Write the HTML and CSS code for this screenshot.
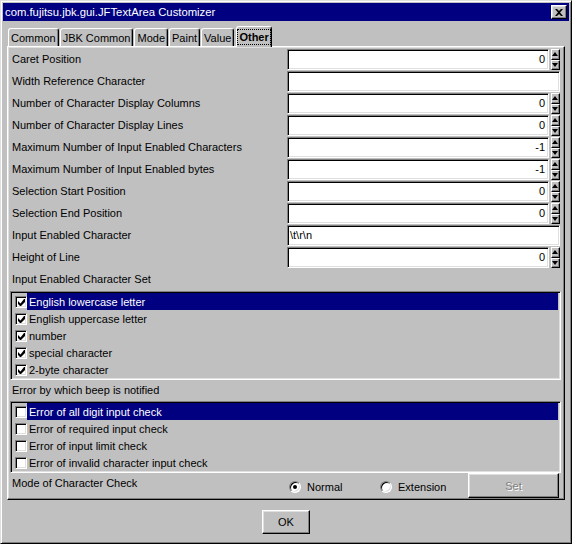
FILE: index.html
```html
<!DOCTYPE html>
<html>
<head>
<meta charset="utf-8">
<title>JFTextArea Customizer</title>
<link rel="stylesheet" href="styles.css">
</head>
<body>
<div class="window">
  <div class="titlebar">
    <span class="title">com.fujitsu.jbk.gui.JFTextArea Customizer</span>
    <span class="close"><svg width="8" height="7" viewBox="0 0 8 7"><path d="M0 0h2l2 2 2-2h2L5 3.5 8 7H6L4 5 2 7H0l3-3.5z" fill="#000"/></svg></span>
  </div>
  <div class="tabs">
    <div class="tab">Common</div>
    <div class="tab">JBK Common</div>
    <div class="tab">Mode</div>
    <div class="tab">Paint</div>
    <div class="tab">Value</div>
    <div class="tab active"><span class="focus">Other</span></div>
  </div>
  <div class="panel">
    <div class="row"><div class="label">Caret Position</div><div class="field num">0</div><div class="spin"><span class="sb up"></span><span class="sb down"></span></div></div>
    <div class="row"><div class="label">Width Reference Character</div><div class="field wide"></div></div>
    <div class="row"><div class="label">Number of Character Display Columns</div><div class="field num">0</div><div class="spin"><span class="sb up"></span><span class="sb down"></span></div></div>
    <div class="row"><div class="label">Number of Character Display Lines</div><div class="field num">0</div><div class="spin"><span class="sb up"></span><span class="sb down"></span></div></div>
    <div class="row"><div class="label">Maximum Number of Input Enabled Characters</div><div class="field num">-1</div><div class="spin"><span class="sb up"></span><span class="sb down"></span></div></div>
    <div class="row"><div class="label">Maximum Number of Input Enabled bytes</div><div class="field num">-1</div><div class="spin"><span class="sb up"></span><span class="sb down"></span></div></div>
    <div class="row"><div class="label">Selection Start Position</div><div class="field num">0</div><div class="spin"><span class="sb up"></span><span class="sb down"></span></div></div>
    <div class="row"><div class="label">Selection End Position</div><div class="field num">0</div><div class="spin"><span class="sb up"></span><span class="sb down"></span></div></div>
    <div class="row"><div class="label">Input Enabled Character</div><div class="field wide">\t\r\n</div></div>
    <div class="row"><div class="label">Height of Line</div><div class="field num">0</div><div class="spin"><span class="sb up"></span><span class="sb down"></span></div></div>

    <div class="section-label">Input Enabled Character Set</div>
    <div class="list">
      <div class="item"><span class="cb checked"><svg width="7" height="7" viewBox="0 0 7 7"><path d="M6 0h1v3L3 7H2L0 5V2l2.5 2.5z" fill="#000"/></svg></span><span class="text selected">English lowercase letter</span></div>
      <div class="item"><span class="cb checked"><svg width="7" height="7" viewBox="0 0 7 7"><path d="M6 0h1v3L3 7H2L0 5V2l2.5 2.5z" fill="#000"/></svg></span><span class="text">English uppercase letter</span></div>
      <div class="item"><span class="cb checked"><svg width="7" height="7" viewBox="0 0 7 7"><path d="M6 0h1v3L3 7H2L0 5V2l2.5 2.5z" fill="#000"/></svg></span><span class="text">number</span></div>
      <div class="item"><span class="cb checked"><svg width="7" height="7" viewBox="0 0 7 7"><path d="M6 0h1v3L3 7H2L0 5V2l2.5 2.5z" fill="#000"/></svg></span><span class="text">special character</span></div>
      <div class="item"><span class="cb checked"><svg width="7" height="7" viewBox="0 0 7 7"><path d="M6 0h1v3L3 7H2L0 5V2l2.5 2.5z" fill="#000"/></svg></span><span class="text">2-byte character</span></div>
    </div>

    <div class="section-label short">Error by which beep is notified</div>
    <div class="list">
      <div class="item"><span class="cb"></span><span class="text selected">Error of all digit input check</span></div>
      <div class="item"><span class="cb"></span><span class="text">Error of required input check</span></div>
      <div class="item"><span class="cb"></span><span class="text">Error of input limit check</span></div>
      <div class="item"><span class="cb"></span><span class="text">Error of invalid character input check</span></div>
    </div>

    <div class="mode-row">
      <div class="label">Mode of Character Check</div>
      <div class="options">
        <label class="opt"><span class="radio on"></span>Normal</label>
        <label class="opt opt2"><span class="radio"></span>Extension</label>
        <button class="btn set" disabled>Set</button>
      </div>
    </div>
  </div>
  <div class="footer"><button class="btn ok">OK</button></div>
</div>
</body>
</html>
```
FILE: styles.css
```css
* { box-sizing: border-box; }
html, body { margin: 0; padding: 0; background: #c0c0c0; }
body {
  font-family: "Liberation Sans", Arial, sans-serif;
  font-size: 11px;
  color: #000;
}
.window {
  width: 572px;
  height: 544px;
  background: #c0c0c0;
  border: 1px solid;
  border-color: #dfdfdf #000 #000 #dfdfdf;
  box-shadow: inset 1px 1px #fff, inset -1px -1px #808080;
  padding: 2px;
  display: flex;
  flex-direction: column;
}
.titlebar {
  height: 18px;
  background: #000080;
  display: flex;
  align-items: center;
  justify-content: space-between;
  padding: 0 2px 0 2px;
}
.title {
  color: #fff;
  font-size: 11.3px;
  line-height: 18px;
}
.close {
  width: 16px;
  height: 14px;
  background: #c0c0c0;
  border: 1px solid;
  border-color: #fff #000 #000 #fff;
  box-shadow: inset -1px -1px #808080, inset 1px 1px #dfdfdf;
  display: flex;
  align-items: center;
  justify-content: center;
}
.close svg { display: block; }

.tabs {
  height: 25px;
  display: flex;
  align-items: flex-end;
  padding-left: 5px;
}
.tab {
  height: 18px;
  padding: 0 2px;
  margin-right: 1px;
  border: 1px solid;
  border-color: #fff #000 transparent #fff;
  border-bottom: none;
  border-radius: 3px 3px 0 0;
  box-shadow: inset -1px 0 #808080;
  line-height: 18px;
  text-align: center;
  white-space: nowrap;
}
.tab.active {
  height: 21px;
  margin-bottom: -1px;
  margin-left: 1px;
  padding: 3px 1px 0 1px;
  font-weight: bold;
  background: #c0c0c0;
  position: relative;
  z-index: 1;
  line-height: 14px;
}
.focus {
  display: inline-block;
  outline: 1px dotted #000;
  padding: 0 1px;
  line-height: 14px;
}

.panel {
  margin: 0 4px;
  border: 1px solid;
  border-color: #fff #000 #000 #fff;
  box-shadow: inset -1px -1px #808080, inset 1px 1px #dfdfdf;
  padding: 2px 2px 1px 2px;
  display: flex;
  flex-direction: column;
}
.row {
  display: flex;
  height: 22px;
  align-items: flex-start;
}
.label {
  width: 277px;
  flex: none;
  padding-left: 2px;
  line-height: 21px;
  white-space: nowrap;
}
.field {
  height: 21px;
  width: 262px;
  background: #fff;
  border: 1px solid;
  border-color: #808080 #fff #fff #808080;
  box-shadow: inset 1px 1px #000, inset -1px -1px #dfdfdf;
  line-height: 19px;
  white-space: nowrap;
}
.field.num {
  text-align: right;
  padding-right: 3px;
  margin-right: 2px;
}
.field.wide {
  width: 273px;
  padding-left: 2px;
}
.spin {
  width: 9px;
  height: 21px;
  display: flex;
  flex-direction: column;
}
.sb {
  flex: 1;
  background: #c0c0c0;
  border: 1px solid;
  border-color: #fff #000 #000 #fff;
  box-shadow: inset -1px -1px #808080;
  display: flex;
  align-items: center;
  justify-content: center;
}
.sb.up::after {
  content: "";
  border-left: 3px solid transparent;
  border-right: 3px solid transparent;
  border-bottom: 4px solid #000;
  margin-left: -1px;
}
.sb.down::after {
  content: "";
  border-left: 3px solid transparent;
  border-right: 3px solid transparent;
  border-top: 4px solid #000;
  margin-left: -1px;
}

.section-label {
  height: 22px;
  line-height: 21px;
  padding-left: 2px;
}
.section-label.short { height: 21px; line-height: 20px; }

.list {
  width: 551px;
  border: 1px solid;
  border-color: #808080 #fff #fff #808080;
  box-shadow: inset 1px 1px #000, inset -1px -1px #dfdfdf;
  padding: 1px 2px 1px 4px;
}
.item {
  height: 17px;
  display: flex;
  align-items: center;
}
.cb {
  width: 12px;
  height: 12px;
  flex: none;
  background: #fff;
  border: 1px solid;
  border-color: #808080 #fff #fff #808080;
  box-shadow: inset 1px 1px #000, inset -1px -1px #dfdfdf;
  display: flex;
  align-items: center;
  justify-content: center;
  padding: 1px 0 0 1px;
}
.cb svg { display: block; }
.text {
  flex: 1;
  height: 17px;
  line-height: 18px;
  padding-left: 2px;
  white-space: nowrap;
}
.text.selected {
  background: #000080;
  color: #fff;
}

.mode-row {
  display: flex;
  height: 25px;
  align-items: flex-start;
}
.options {
  display: grid;
  grid-template-columns: 92px 89px 91px;
  height: 25px;
}
.opt {
  display: flex;
  align-items: center;
  padding-left: 2px;
  padding-top: 3px;
  white-space: nowrap;
}
.opt2 { padding-left: 1px; }
.radio {
  width: 12px;
  height: 12px;
  border-radius: 50%;
  background: #fff;
  border: 1px solid;
  border-color: #808080 #fff #fff #808080;
  box-shadow: inset 1px 1px #000, inset -1px -1px #dfdfdf;
  margin-right: 6px;
  flex: none;
  display: flex;
  align-items: center;
  justify-content: center;
}
.radio.on::after {
  content: "";
  width: 4px;
  height: 4px;
  border-radius: 50%;
  background: #000;
}
.btn {
  font-family: "Liberation Sans", Arial, sans-serif;
  font-size: 11px;
  background: #c0c0c0;
  border: 1px solid;
  border-color: #fff #000 #000 #fff;
  box-shadow: inset -1px -1px #808080, inset 1px 1px #dfdfdf;
  padding: 0;
  margin: 0;
  color: #000;
}
.btn.set {
  width: 91px;
  height: 25px;
  color: #808080;
  text-shadow: 1px 1px #fff;
}
.footer {
  display: flex;
  justify-content: center;
  padding-top: 10px;
}
.btn.ok {
  width: 48px;
  height: 24px;
}
```
